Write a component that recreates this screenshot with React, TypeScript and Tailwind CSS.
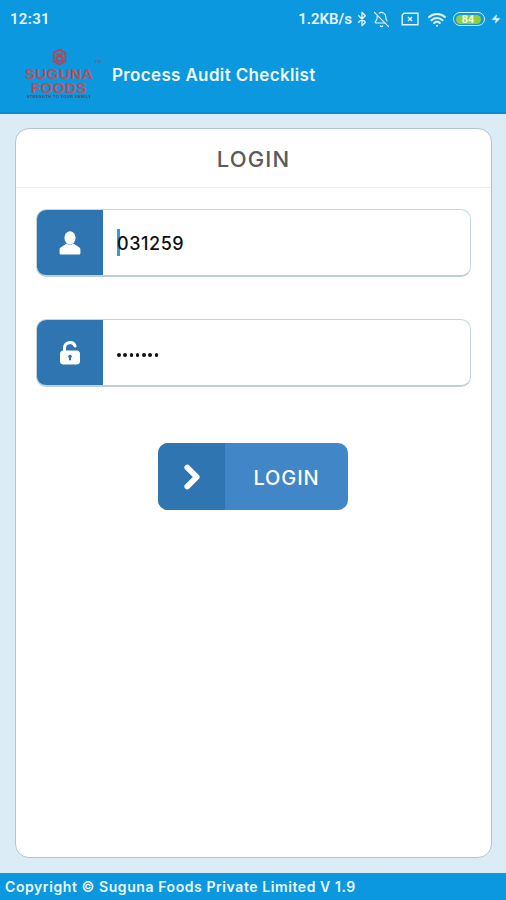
import React from 'react';
import { Bluetooth, BellOff, Wifi, Zap, ChevronRight } from 'lucide-react';

const UI_FONT = "font-['Inter','Open_Sans',sans-serif]";

const Logo: React.FC = () => (
  <div className="w-[72px] h-[54px] flex flex-col items-center relative">
    <svg viewBox="0 0 16 18" className="w-[15px] h-[18px]" fill="none" stroke="#b9424a" strokeWidth="1.9">
      <path d="M8 1 14.2 4.4v9.2L8 17 1.8 13.6V4.4Z" />
      <path d="M4.8 5.8 11.2 9.6M11.2 5.8 4.8 9.6M4.8 9.6v2.6L8 14l3.2-1.8V9.6" />
    </svg>
    <span className="text-[15px] leading-[14px] font-bold font-['Liberation_Sans',sans-serif] tracking-[0.5px] mt-[1px] text-[#c24c55] whitespace-nowrap">SUGUNA</span>
    <span className="text-[15px] leading-[13px] font-bold font-['Liberation_Sans',sans-serif] tracking-[0.5px] text-[#c24c55] whitespace-nowrap">FOODS</span>
    <span className="text-[4px] leading-[6px] font-bold text-[#6d3a58] font-['Liberation_Sans',sans-serif] whitespace-nowrap tracking-[0.35px]">STRENGTH TO YOUR FAMILY</span>
    <span className="absolute right-[-6px] top-[12px] text-[4px] leading-none text-[#6b5a70]">TM</span>
  </div>
);

const StatusBar: React.FC = () => (
  <div className="h-[38px] flex items-center justify-between pl-[10px] pr-[5px] text-[#e6f4fc]">
    <span className="text-[15px] font-semibold font-['Roboto',sans-serif] tracking-[0.3px]">12:31</span>
    <div className="flex items-center">
      <span className="text-[15px] font-semibold font-['Roboto',sans-serif]">1.2KB/s</span>
      <Bluetooth className="w-[16px] h-[18px] ml-[2px]" strokeWidth={2} />
      <BellOff className="w-[17px] h-[17px] ml-[3px]" strokeWidth={1.6} />
      <svg viewBox="0 0 18 14" className="w-[18px] h-[14px] ml-[11px]" fill="none" stroke="currentColor" strokeWidth="1.4">
        <path d="M3 1.2h14v11.6H1.2V3Z" />
        <path d="m7 5 4 4M11 5 7 9" />
      </svg>
      <Wifi className="w-[20px] h-[19px] ml-[8px]" strokeWidth={2.6} />
      <div className="ml-[6px] w-[32px] h-[14px] rounded-[7px] border border-[#d6eefa] p-[1.5px] flex">
        <div className="w-[25px] rounded-[5px] bg-[#8fcf3c] text-[11px] leading-[9px] font-bold text-[#f4fbe6] text-center font-['Roboto',sans-serif]">84</div>
      </div>
      <Zap className="w-[10px] h-[14px] ml-[6px]" fill="currentColor" strokeWidth={1} />
    </div>
  </div>
);

const Field: React.FC<{ icon: React.ReactNode; children: React.ReactNode }> = ({ icon, children }) => (
  <div className="h-[68px] flex rounded-[10px] border border-[#c4d8dc] border-b-2 border-b-[#bcd0d6] bg-white overflow-hidden">
    <div className="w-[67px] -ml-px -my-px bg-[#2f75b2] flex items-center justify-center shrink-0">{icon}</div>
    <div className="flex-1 flex items-center pl-[14px]">{children}</div>
  </div>
);

export default function App() {
  return (
    <div className={`h-[900px] w-[506px] flex flex-col bg-[#dcecf6] ${UI_FONT}`}>
      <header className="h-[114px] bg-[#0b98df] border-b-2 border-[#0a8ed3] shrink-0">
        <StatusBar />
        <div className="flex items-center pl-[23px] h-[74px]">
          <Logo />
          <h1 className="ml-[17px] text-[17px] font-semibold text-[#eef8fd] tracking-[0.35px] pt-[1px]">Process Audit Checklist</h1>
        </div>
      </header>

      <main className="flex-1 pt-[14px] pb-[15px] pl-[15px] pr-[14px] flex">
        <div className="flex-1 bg-white rounded-[14px] border border-[#b4c4cc] flex flex-col">
          <div className="h-[59px] border-b border-[#eceff0] flex items-center justify-center pt-[3px]">
            <h2 className="text-[22px] font-medium text-[#5a5a5a] tracking-[1.1px]">LOGIN</h2>
          </div>

          <div className="pt-[21px] pl-[20px] pr-[20px] flex flex-col gap-[42px]">
            <Field
              icon={
                <svg viewBox="0 0 22 24" className="w-[22px] h-[24px]" fill="white">
                  <ellipse cx="11" cy="6.8" rx="5.6" ry="6.6" />
                  <path d="M7.6 12.5 1.6 16.6C.8 17.3.6 18 .6 19v3.2c0 .8.5 1.3 1.3 1.3h18.2c.8 0 1.3-.5 1.3-1.3V19c0-1-.2-1.7-1-2.4l-6-4.1c-2 1.7-4.8 1.7-6.8 0Z" />
                </svg>
              }
            >
              <span className="w-[3px] h-[27px] bg-[#2f9fdc] -mr-[3px] shrink-0" />
              <span className="text-[18px] font-medium text-[#111] tracking-[0.55px] pt-[1px]">031259</span>
            </Field>
            <Field
              icon={
                <svg viewBox="0 0 24 24" className="w-[24px] h-[25px]">
                  <path d="M6.5 11V7.5a5.5 5.5 0 0 1 10.6-2" fill="none" stroke="white" strokeWidth="3" strokeLinecap="round" />
                  <rect x="2" y="10" width="20" height="14" rx="3.5" fill="white" />
                  <circle cx="12" cy="16" r="1.8" fill="#2f75b2" />
                  <path d="M11.2 16.5h1.6l.4 3.2h-2.4Z" fill="#2f75b2" />
                </svg>
              }
            >
              <span className="flex gap-[2.8px] items-center pt-[5px]">
                {[0, 1, 2, 3, 4, 5, 6].map(i => (
                  <span key={i} className="w-[3.5px] h-[3.5px] rounded-full bg-[#111]" />
                ))}
              </span>
            </Field>
          </div>

          <div className="flex justify-center mt-[56px] pr-[1px]">
            <button className="w-[190px] h-[67px] rounded-[10px] bg-[#4186c6] flex overflow-hidden text-white">
              <span className="w-[67px] bg-[#2f75b2] flex items-center justify-center">
                <ChevronRight className="w-[38px] h-[38px]" strokeWidth={3.6} />
              </span>
              <span className="flex-1 flex items-center justify-center text-[20px] font-medium tracking-[0.9px] pt-[3px]">LOGIN</span>
            </button>
          </div>
        </div>
      </main>

      <footer className="h-[27px] bg-[#0b98df] shrink-0 flex items-center pl-[5px] text-[14px] font-semibold text-[#eef8fd] tracking-[0.58px]">
        Copyright © Suguna Foods Private Limited V 1.9
      </footer>
    </div>
  );
}
